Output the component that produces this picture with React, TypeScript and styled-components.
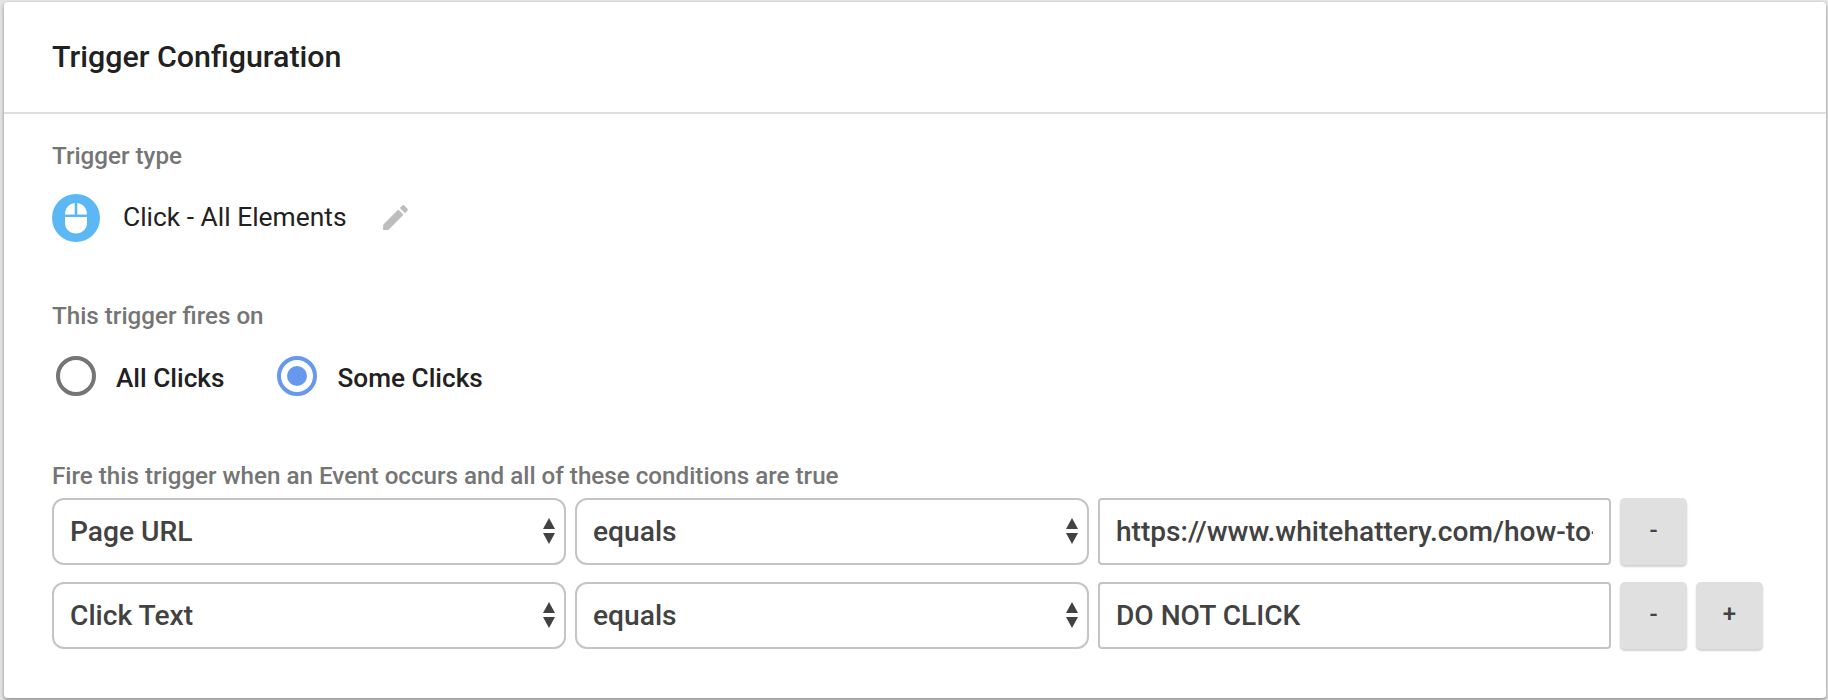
import styled, { createGlobalStyle } from 'styled-components'

const GlobalStyle = createGlobalStyle`
	html, body {
		margin: 0;
		padding: 0;
		background: #e6e6e6;
		font-family: Roboto, "Liberation Sans", sans-serif;
	}
`

const Page = styled.div`
	box-sizing: border-box;
	width: 1828px;
	height: 700px;
	padding: 2px 2px 2px 4px;
	overflow: hidden;
`

const Card = styled.section`
	box-sizing: border-box;
	height: 696px;
	background: #fff;
	border-radius: 4px;
	box-shadow: 0 2px 4px rgba(0, 0, 0, 0.4);
`

const CardHeader = styled.header`
	box-sizing: border-box;
	height: 112px;
	padding: 0 48px 2px;
	display: flex;
	align-items: center;
	border-bottom: 2px solid #e0e0e0;
`

const Title = styled.h2`
	margin: 0;
	font-size: 30.4px;
	font-weight: 500;
	color: #212121;
`

const CardBody = styled.div`
	padding: 28px 48px 0;
`

const Label = styled.div<{ $top?: number }>`
	font-size: 24.2px;
	line-height: 28px;
	font-weight: 500;
	color: #757575;
	margin-top: ${(p) => p.$top ?? 0}px;
`

const TypeRow = styled.div`
	display: flex;
	align-items: center;
	margin-top: 24px;
	height: 48px;
`

const TypeName = styled.span`
	margin: 0 0 2px 23px;
	font-size: 26.4px;
	color: #212121;
`

const EditIcon = styled.svg`
	margin: 0 0 2px 32px;
	width: 33px;
	height: 33px;
	fill: #bdbdbd;
`

const RadioRow = styled.div`
	display: flex;
	align-items: center;
	margin-top: 26px;
	margin-left: 4px;
	height: 40px;
`

const RadioOption = styled.label`
	display: flex;
	align-items: center;
	gap: 20px;
	margin-right: 53px;
	font-size: 26.2px;
	font-weight: 500;
	color: #212121;
`

const RadioText = styled.span`
	margin-top: 4px;
`

const RadioCircle = styled.span<{ $checked?: boolean }>`
	box-sizing: border-box;
	width: 40px;
	height: 40px;
	border-radius: 50%;
	display: flex;
	align-items: center;
	justify-content: center;
	border: 4px solid ${(p) => (p.$checked ? '#6699ee' : '#757575')};
	&::after {
		content: '';
		display: ${(p) => (p.$checked ? 'block' : 'none')};
		width: 20px;
		height: 20px;
		border-radius: 50%;
		background: #6699ee;
	}
`

const Conditions = styled.div`
	display: flex;
	flex-direction: column;
	gap: 17px;
	margin-top: 8px;
`

const ConditionRow = styled.div`
	display: flex;
	gap: 9px;
`

const Select = styled.div`
	box-sizing: border-box;
	width: 514px;
	height: 67px;
	padding: 0 8px 0 16px;
	display: flex;
	align-items: center;
	justify-content: space-between;
	border: 2px solid #c4c4c4;
	border-radius: 12px;
	font-size: 28.2px;
	font-weight: 500;
	color: #424242;
`

const SelectArrows = styled.svg`
	width: 14px;
	height: 28px;
	fill: #424242;
`

const TextInput = styled.input`
	box-sizing: border-box;
	width: 513px;
	height: 67px;
	padding: 0 16px;
	border: 2px solid #c4c4c4;
	border-radius: 4px;
	outline: none;
	background: #fff;
	font-family: inherit;
	font-size: 28.1px;
	font-weight: 500;
	color: #424242;
`

const RowButton = styled.button`
	width: 67px;
	height: 67px;
	padding: 0 0 4px;
	border: none;
	border-radius: 5px;
	background: #e0e0e0;
	box-shadow: 0 2px 2px rgba(0, 0, 0, 0.18);
	font-family: inherit;
	font-size: 24px;
	font-weight: 500;
	color: #424242;
`

function Arrows() {
	return (
		<SelectArrows viewBox="0 0 14 28">
			<path d="M7 0 L13 11 H1 Z" />
			<path d="M1 15 H13 L7 26 Z" />
		</SelectArrows>
	)
}

const conditions = [
	{
		variable: 'Page URL',
		value: 'https://www.whitehattery.com/how-to-stop-the-clicks-from-firing',
		canAdd: false,
	},
	{ variable: 'Click Text', value: 'DO NOT CLICK', canAdd: true },
]

export default function App() {
	return (
		<Page>
			<GlobalStyle />
			<Card>
				<CardHeader>
					<Title>Trigger Configuration</Title>
				</CardHeader>
				<CardBody>
					<Label>Trigger type</Label>
					<TypeRow>
						<svg width="48" height="48" viewBox="0 0 48 48">
							<circle cx="24" cy="24" r="24" fill="#5bb8f5" />
							<path
								fill="#fff"
								d="M13 20.5C13 14.5 17 9.6 22.7 9.1V20.5ZM25.3 9.1C31 9.6 35 14.5 35 20.5H25.3ZM13 23H35V29C35 35 30 39.5 24 39.5S13 35 13 29Z"
							/>
						</svg>
						<TypeName>Click - All Elements</TypeName>
						<EditIcon viewBox="0 0 24 24">
							<path d="M3 17.25V21h3.75L17.81 9.94l-3.75-3.75L3 17.25zM20.71 7.04a1 1 0 0 0 0-1.41l-2.34-2.34a1 1 0 0 0-1.41 0l-1.83 1.83 3.75 3.75 1.83-1.83z" />
						</EditIcon>
					</TypeRow>
					<Label $top={60}>This trigger fires on</Label>
					<RadioRow>
						<RadioOption>
							<RadioCircle />
							<RadioText>All Clicks</RadioText>
						</RadioOption>
						<RadioOption>
							<RadioCircle $checked />
							<RadioText>Some Clicks</RadioText>
						</RadioOption>
					</RadioRow>
					<Label $top={66}>Fire this trigger when an Event occurs and all of these conditions are true</Label>
					<Conditions>
						{conditions.map((c) => (
							<ConditionRow key={c.variable}>
								<Select>
									{c.variable}
									<Arrows />
								</Select>
								<Select>
									equals
									<Arrows />
								</Select>
								<TextInput readOnly value={c.value} />
								<RowButton>-</RowButton>
								{c.canAdd && <RowButton>+</RowButton>}
							</ConditionRow>
						))}
					</Conditions>
				</CardBody>
			</Card>
		</Page>
	)
}
